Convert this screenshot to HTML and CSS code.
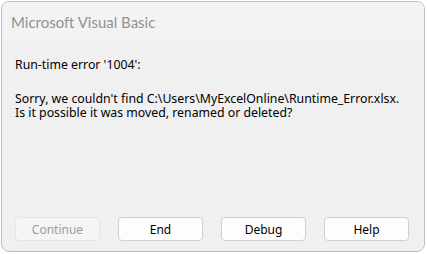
FILE: index.html
```html
<!DOCTYPE html>
<html lang="en">
<head>
  <meta charset="UTF-8" />
  <title>Microsoft Visual Basic</title>
  <link rel="stylesheet" href="styles.css">
</head>
<body>

  <div class="dialog">
    <div class="titlebar">Microsoft Visual Basic</div>

    <div class="content">
      <p class="heading">Run-time error '1004':</p>
      <p class="message">
        Sorry, we couldn't find C:\Users\MyExcelOnline\Runtime_Error.xlsx.<br>
        Is it possible it was moved, renamed or deleted?
      </p>
    </div>

    <div class="buttons">
      <button class="btn" disabled>Continue</button>
      <button class="btn">End</button>
      <button class="btn">Debug</button>
      <button class="btn">Help</button>
    </div>
  </div>

</body>
</html>
```

FILE: styles.css
```css
body {
  margin: 0;
  background-color: #fff;
  font-family: 'Noto Sans', 'Open Sans', sans-serif;
}

.dialog {
  margin: 1px 0 0 1px;
  width: 424px;
  height: 251px;
  box-sizing: border-box;
  border: 1px solid #bdbdbd;
  border-radius: 8px;
  background-color: #f0f0f0;
  overflow: hidden;
  display: flex;
  flex-direction: column;
}

.titlebar {
  height: 39px;
  box-sizing: border-box;
  padding: 11px 0 0 9px;
  background-color: #f3f3f3;
  color: #929292;
  font-family: 'Lato', sans-serif;
  font-size: 15px;
  line-height: 18px;
}

.content {
  flex: 1;
  padding: 17px 0 0 13px;
  font-size: 12.3px;
  line-height: 14px;
  color: #000;
}

.content p {
  margin: 0;
}

.content .heading {
  margin-bottom: 20px;
}

.buttons {
  display: flex;
  gap: 18px;
  padding: 0 0 10px 13px;
}

.btn {
  width: 85px;
  height: 24px;
  padding: 0;
  font-family: inherit;
  font-size: 12px;
  color: #000;
  background-color: #fdfdfd;
  border: 1px solid #d0d0d0;
  border-radius: 4px;
}

.btn:disabled {
  color: #9d9d9d;
  background-color: #f5f5f5;
  border-color: #e6e6e6;
}
```
